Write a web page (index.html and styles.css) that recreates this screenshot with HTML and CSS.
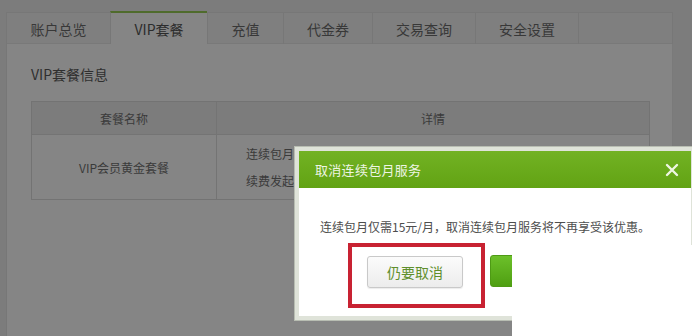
FILE: index.html
```html
<!DOCTYPE html>
<html lang="zh-CN">
<head>
<meta charset="utf-8">
<title>VIP套餐</title>
<link rel="stylesheet" href="styles.css">
</head>
<body>
<div class="page">
  <div class="panel">
    <div class="tabs">
      <div class="tab t1">账户总览</div>
      <div class="tab t2 active">VIP套餐</div>
      <div class="tab t3">充值</div>
      <div class="tab t4">代金券</div>
      <div class="tab t5">交易查询</div>
      <div class="tab t6">安全设置</div>
      <div class="tab rest"></div>
    </div>
    <div class="content">
      <h2 class="section-title">VIP套餐信息</h2>
      <div class="table">
        <div class="row head">
          <div class="cell c1">套餐名称</div>
          <div class="cell c2">详情</div>
        </div>
        <div class="row body-row">
          <div class="cell c1">VIP会员黄金套餐</div>
          <div class="cell c2 detail">
            <div>连续包月</div>
            <div>续费发起</div>
          </div>
        </div>
      </div>
    </div>
  </div>
</div>

<div class="modal">
  <div class="modal-head">
    <span class="modal-title">取消连续包月服务</span>
    <svg class="close" width="14" height="14" viewBox="0 0 14 14"><path d="M2 2 L12 12 M12 2 L2 12" stroke="#eef6e2" stroke-width="2.4" stroke-linecap="round" fill="none"/></svg>
  </div>
  <div class="modal-body">
    <p class="modal-text">连续包月仅需15元/月，取消连续包月服务将不再享受该优惠。</p>
    <div class="actions">
      <button class="btn btn-cancel">仍要取消</button>
      <button class="btn btn-keep">继续</button>
    </div>
  </div>
  <div class="mark"></div>
</div>
<div class="blank"></div>
</body>
</html>
```
FILE: styles.css
```css
* { box-sizing: border-box; }
html, body { margin: 0; padding: 0; }
body {
  width: 692px;
  height: 336px;
  overflow: hidden;
  position: relative;
  background: #7c7c7c;
  font-family: "Noto Sans CJK SC", "Noto Sans", sans-serif;
}
.page { padding: 11px 0 0 6px; }
.panel { width: 667px; }
.tabs {
  display: flex;
  align-items: flex-end;
  height: 33px;
}
.tab {
  height: 32px;
  background: #7f7f7f;
  border-top: 1px solid #777;
  border-left: 1px solid #777;
  color: #383838;
  font-size: 14px;
  display: flex;
  align-items: center;
  justify-content: center;
}
.tab.active {
  height: 33px;
  background: #858585;
  border-top: 2px solid #4f6b2c;
  color: #2c2c2c;
  padding-top: 0;
}
.t1 { width: 104px; }
.t2 { width: 97px; }
.t3 { width: 76px; }
.t4 { width: 89px; }
.t5 { width: 103px; }
.t6 { width: 103px; }
.rest { width: 95px; border-right: 1px solid #777; }
.tabs .tab:not(.active) { box-shadow: inset 0 -1px 0 #797979; }
.content {
  background: #858585;
  border-left: 1px solid #777;
  border-right: 1px solid #7a7a7a;
  height: 300px;
  padding: 20px 0 0 24px;
}
.section-title {
  margin: 0;
  font-size: 14px;
  font-weight: normal;
  line-height: 20px;
  color: #2f2f2f;
}
.table {
  margin-top: 17px;
  width: 619px;
  border: 1px solid #737373;
  font-size: 12px;
  color: #3a3a3a;
}
.row { display: flex; }
.head { height: 33px; background: #7c7c7c; border-bottom: 1px solid #747474; }
.body-row { height: 64px; background: #858585; }
.cell { display: flex; align-items: center; justify-content: center; }
.c1 { width: 185px; border-right: 1px solid #747474; }
.c2 { flex: 1; }
.detail {
  flex-direction: column;
  align-items: flex-start;
  justify-content: center;
  gap: 9px;
  padding-left: 29px;
  line-height: 18px;
}

.modal {
  position: absolute;
  left: 295px;
  top: 147px;
  width: 400px;
  height: 173px;
  border: 4px solid #dfe3d9;
  background: #fff;
  box-shadow: 0 0 0 1px #b8bdb2;
}
.modal-head {
  height: 37px;
  background: linear-gradient(#72b223, #62a314);
  display: flex;
  align-items: center;
  justify-content: space-between;
  padding: 0 12px 0 16px;
}
.modal-title {
  color: #eef5e4;
  font-size: 13px;
  letter-spacing: 0.3px;
}
.modal-body {
  padding: 30px 0 0 21px;
}
.modal-text {
  margin: 0;
  font-size: 12px;
  line-height: 18px;
  color: #4d4d4d;
}
.actions {
  display: flex;
  gap: 27px;
  margin-top: 20px;
  padding-left: 47px;
}
.btn {
  height: 32px;
  border-radius: 3px;
  font-family: inherit;
  font-size: 14px;
  padding: 0;
}
.btn-cancel {
  width: 96px;
  background: linear-gradient(#fbfbfb, #ececec);
  border: 1px solid #c9c9c9;
  color: #5f8f2c;
  box-shadow: 0 1px 1px rgba(0,0,0,0.08);
}
.btn-keep {
  width: 96px;
  margin-top: -1px;
  background: linear-gradient(#6cc02a, #4f9f12);
  border: 1px solid #4e9a15;
  color: #fff;
}
.mark {
  position: absolute;
  left: 49px;
  top: 92px;
  width: 137px;
  height: 65px;
  border: 4px solid #c82232;
}
.blank {
  position: absolute;
  left: 512px;
  top: 245px;
  width: 180px;
  height: 91px;
  background: #fff;
}
```
